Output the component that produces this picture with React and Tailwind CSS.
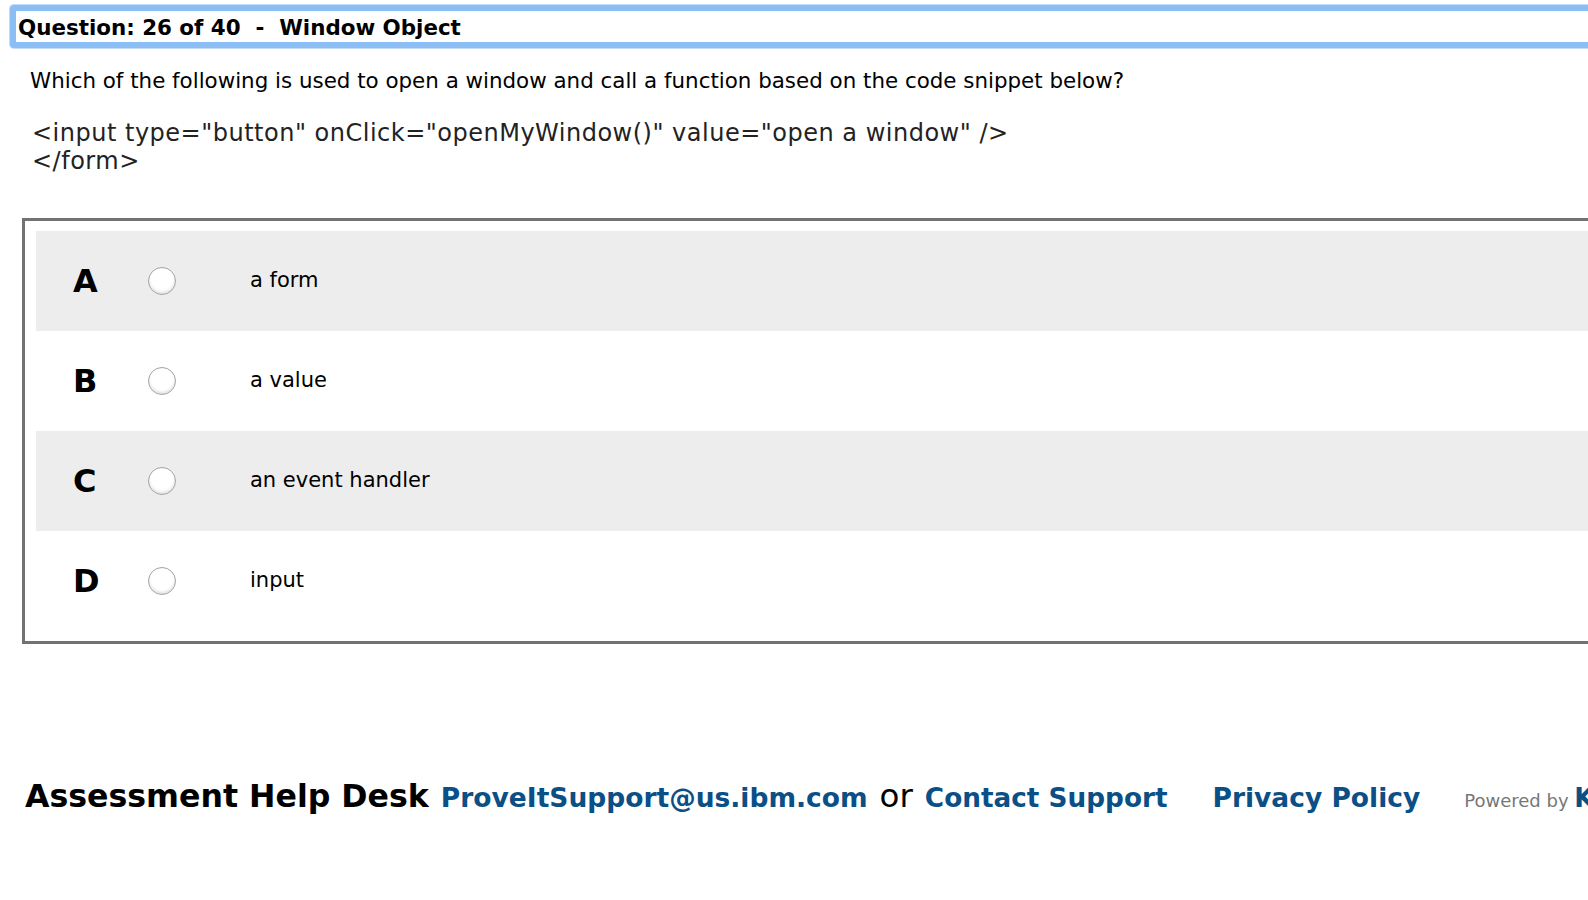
import React from 'react';

const options = [
  { key: 'A', text: 'a form', shaded: true },
  { key: 'B', text: 'a value', shaded: false },
  { key: 'C', text: 'an event handler', shaded: true },
  { key: 'D', text: 'input', shaded: false },
];

function Radio() {
  return (
    <span className="block w-[28px] h-[28px] rounded-full border border-[#a4a4a4] bg-white shadow-[inset_0_-2px_3px_rgba(0,0,0,0.12)]" />
  );
}

export default function App() {
  return (
    <div className="w-[1588px] h-[900px] overflow-hidden bg-white text-black font-['DejaVu_Sans',Verdana,sans-serif]">
      {/* title bar */}
      <div className="pt-[5px] pl-[10px]">
        <div className="w-[1600px] h-[43px] rounded-[4px] border-[6px] border-[#8cbef6] shadow-[0_0_0_1px_#c4dcf9] bg-white flex items-center pl-[2px] pt-[3px]">
          <span className="font-bold text-[21.4px] leading-none whitespace-pre">Question: 26 of 40  -  Window Object</span>
        </div>
      </div>

      {/* question */}
      <p className="ml-[30px] mt-[19px] text-[21.4px] leading-[28px]">
        Which of the following is used to open a window and call a function based on the code snippet below?
      </p>
      <div className="ml-[32px] mt-[24px] text-[24px] leading-[28px] tracking-[0.5px] text-[#222]">
        <div>&lt;input type="button" onClick="openMyWindow()" value="open a window" /&gt;</div>
        <div>&lt;/form&gt;</div>
      </div>

      {/* answers */}
      <div className="ml-[22px] mt-[43px] w-[1600px] border-[3px] border-[#727272] pt-[10px] pb-[10px] pl-[11px]">
        {options.map((o) => (
          <div key={o.key} className={`h-[100px] flex items-center ${o.shaded ? 'bg-[#ededed]' : 'bg-white'}`}>
            <span className="w-[37px]" />
            <span className="w-[75px] font-bold text-[32px] leading-none">{o.key}</span>
            <span className="w-[102px]"><Radio /></span>
            <span className="text-[21px]">{o.text}</span>
          </div>
        ))}
      </div>

      {/* footer */}
      <div className="mt-[128px] ml-[25px] flex items-baseline whitespace-nowrap">
        <span className="font-bold text-[31.6px]">Assessment Help Desk</span>
        <span className="ml-[12px] font-bold text-[26.5px] text-[#0b4f87]">ProveItSupport@us.ibm.com</span>
        <span className="ml-[12px] text-[32.5px]">or</span>
        <span className="ml-[12px] font-bold text-[26.3px] text-[#0b4f87]">Contact Support</span>
        <span className="ml-[45px] font-bold text-[26.5px] text-[#0b4f87]">Privacy Policy</span>
        <span className="ml-[44px] text-[18px] text-[#777]">Powered by <span className="text-[26px] text-[#0b4f87] font-bold">K</span></span>
      </div>
    </div>
  );
}
